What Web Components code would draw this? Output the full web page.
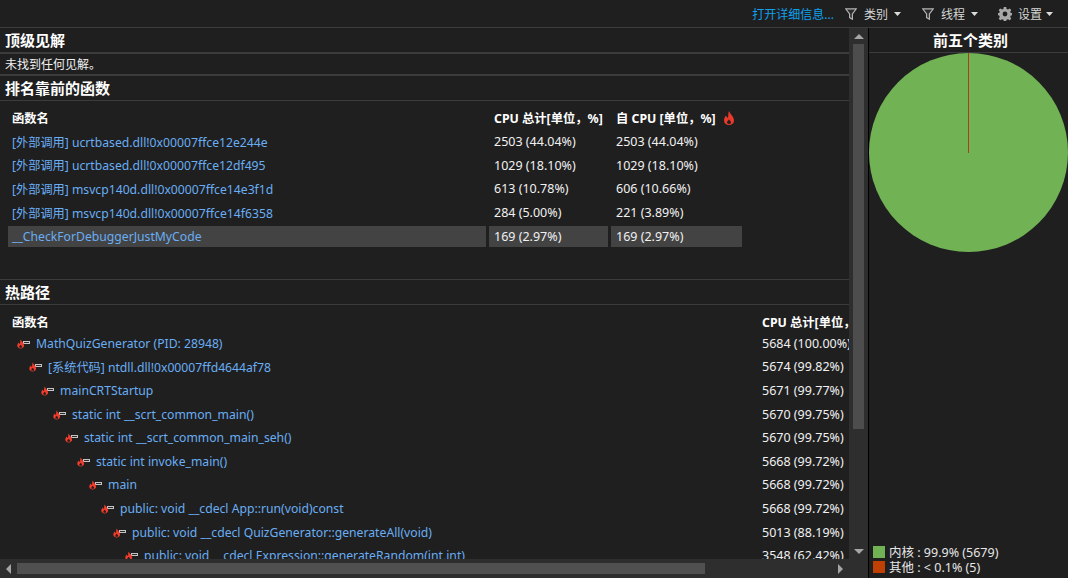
<!DOCTYPE html>
<html lang="zh">
<head>
<meta charset="utf-8">
<title>CPU</title>
<style>
html,body{margin:0;padding:0;background:#1f1f1f;height:100%;overflow:hidden}
body{font:12.5px "Noto Sans","Noto Sans CJK SC",sans-serif;color:#f1f1f1}
</style>
</head>
<body>
<profiler-app>
  <profiler-toolbar slot="toolbar">
    <a-link>打开详细信息...</a-link>
    <tool-button icon="filter" style="margin-left:11px">类别</tool-button>
    <tool-button icon="filter" style="margin-left:21px">线程</tool-button>
    <tool-button icon="gear" style="margin-left:20px">设置</tool-button>
  </profiler-toolbar>
  <scroll-area slot="content">
    <section-heading thick>顶级见解</section-heading>
    <note-row>未找到任何见解。</note-row>
    <section-heading>排名靠前的函数</section-heading>
    <func-table>
      <func-row header><row-cell>函数名</row-cell><row-cell>CPU 总计[单位，%]</row-cell><row-cell>自 CPU [单位，%]<flame-icon></flame-icon></row-cell></func-row>
      <func-row><row-cell link>[外部调用] ucrtbased.dll!0x00007ffce12e244e</row-cell><row-cell>2503 (44.04%)</row-cell><row-cell>2503 (44.04%)</row-cell></func-row>
      <func-row><row-cell link>[外部调用] ucrtbased.dll!0x00007ffce12df495</row-cell><row-cell>1029 (18.10%)</row-cell><row-cell>1029 (18.10%)</row-cell></func-row>
      <func-row><row-cell link>[外部调用] msvcp140d.dll!0x00007ffce14e3f1d</row-cell><row-cell>613 (10.78%)</row-cell><row-cell>606 (10.66%)</row-cell></func-row>
      <func-row><row-cell link>[外部调用] msvcp140d.dll!0x00007ffce14f6358</row-cell><row-cell>284 (5.00%)</row-cell><row-cell>221 (3.89%)</row-cell></func-row>
      <func-row selected><row-cell link>__CheckForDebuggerJustMyCode</row-cell><row-cell>169 (2.97%)</row-cell><row-cell>169 (2.97%)</row-cell></func-row>
    </func-table>
    <section-heading top>热路径</section-heading>
    <hot-table>
      <hot-row header total="CPU 总计[单位，%]">函数名</hot-row>
      <hot-row level="0" total="5684 (100.00%)">MathQuizGenerator (PID: 28948)</hot-row>
      <hot-row level="1" total="5674 (99.82%)">[系统代码] ntdll.dll!0x00007ffd4644af78</hot-row>
      <hot-row level="2" total="5671 (99.77%)">mainCRTStartup</hot-row>
      <hot-row level="3" total="5670 (99.75%)">static int __scrt_common_main()</hot-row>
      <hot-row level="4" total="5670 (99.75%)">static int __scrt_common_main_seh()</hot-row>
      <hot-row level="5" total="5668 (99.72%)">static int invoke_main()</hot-row>
      <hot-row level="6" total="5668 (99.72%)">main</hot-row>
      <hot-row level="7" total="5668 (99.72%)">public: void __cdecl App::run(void)const</hot-row>
      <hot-row level="8" total="5013 (88.19%)">public: void __cdecl QuizGenerator::generateAll(void)</hot-row>
      <hot-row level="9" total="3548 (62.42%)">public: void __cdecl Expression::generateRandom(int,int)</hot-row>
    </hot-table>
  </scroll-area>
  <category-panel slot="side">
    <pie-chart></pie-chart>
    <legend-item slot="legend" color="#71b354">内核 : 99.9% (5679)</legend-item>
    <legend-item slot="legend" color="#bf4000">其他 : &lt; 0.1% (5)</legend-item>
  </category-panel>
</profiler-app>

<script>
function def(name, html, extra){
  const t=document.createElement('template');t.innerHTML=html;
  customElements.define(name,class extends HTMLElement{
    constructor(){super();this.attachShadow({mode:'open'}).appendChild(t.content.cloneNode(true));}
    connectedCallback(){extra&&extra(this,this.shadowRoot);}
  });
}
const arrow=(pts,w,h)=>`<svg width="${w}" height="${h}" viewBox="0 0 ${w} ${h}"><polygon points="${pts}" fill="#a6a6a6"/></svg>`;

def('profiler-app',`<style>
:host{display:flex;flex-direction:column;width:1068px;height:578px;background:#1f1f1f;overflow:hidden}
.main{flex:1;min-height:0;display:grid;grid-template-columns:849px 19px 1px 199px}
.left{display:flex;flex-direction:column;min-height:0;min-width:0}
.body{flex:1;min-height:0;overflow:hidden}
.sep{background:#000}
.vbar{background:#2e2e2e;display:flex;flex-direction:column;padding-bottom:19px;align-items:center}
.vbtn{height:16px;display:flex;align-items:center;justify-content:center;flex:none}
.vthumb{width:11px;height:385px;background:#4d4d4d;flex:none}
.sp{flex:1}
.hbar{height:19px;flex:none;background:#2e2e2e;display:flex;align-items:center}
.hbtn{width:17px;height:19px;display:flex;align-items:center;justify-content:center;flex:none}
.hthumb{width:688px;height:11px;background:#505050}
</style>
<slot name="toolbar"></slot>
<div class="main">
  <div class="left">
    <div class="body"><slot name="content"></slot></div>
    <div class="hbar">
      <div class="hbtn">${arrow('5,0 5,10 0,5',5,10)}</div>
      <div class="hthumb"></div><div class="sp"></div>
      <div class="hbtn">${arrow('0,0 0,10 5,5',5,10)}</div>
    </div>
  </div>
  <div class="vbar">
    <div class="vbtn">${arrow('5,0 10,5 0,5',10,5)}</div>
    <div class="vthumb"></div><div class="sp"></div>
    <div class="vbtn">${arrow('0,0 10,0 5,5',10,5)}</div>
  </div>
  <div class="sep"></div>
  <slot name="side"></slot>
</div>`);

def('profiler-toolbar',`<style>
:host{display:flex;align-items:center;justify-content:flex-end;height:27px;flex:none;border-bottom:1px solid #3c3c3c;padding-right:15px;background:#1f1f1f;white-space:nowrap}
</style><slot></slot>`);

def('a-link',`<style>:host{display:inline-block;color:#0ea2ee;font-size:12px}</style><slot></slot>`);

const icons={
 filter:`<svg width="12" height="12" viewBox="0 0 12 12"><path d="M.7 .8H11.3L7.4 5.9V11.2L4.6 9.6V5.9Z" fill="#2c2c2c" stroke="#b4b4b4" stroke-width="1.2"/></svg>`,
 gear:`<svg width="14" height="14" viewBox="0 0 14 14"><path fill="#a8a8a8" fill-rule="evenodd" d="M5.8 0H8.2L8.6 1.9 10 2.5 11.7 1.4 13.3 3 12.2 4.7 12.8 6 14 6V8.3L12.8 8.6 12.2 10 13.3 11.7 11.7 13.3 10 12.2 8.6 12.8 8.2 14H5.8L5.4 12.8 4 12.2 2.3 13.3 0.7 11.7 1.8 10 1.2 8.6 0 8.3V6L1.2 6 1.8 4.7 0.7 3 2.3 1.4 4 2.5 5.4 1.9ZM7 4.6A2.4 2.4 0 1 0 7 9.4 2.4 2.4 0 1 0 7 4.6Z"/></svg>`
};
def('tool-button',`<style>
:host{display:inline-flex;align-items:center;color:#d6d6d6;font-size:12px}
.i{display:flex;margin-right:6px}
:host([icon=filter]) .i{margin-right:7px}
.c{margin-left:6px;display:flex}
:host([icon=gear]) .c{margin-left:4px}
</style><span class="i"></span><slot></slot>
<span class="c"><svg width="7" height="4" viewBox="0 0 7 4"><polygon points="0,0 7,0 3.5,4" fill="#dcdcdc"/></svg></span>`,
(el,r)=>{r.querySelector('.i').innerHTML=icons[el.getAttribute('icon')]||'';});

def('scroll-area',`<style>:host{display:block;height:100%;overflow:hidden;white-space:nowrap}</style><slot></slot>`);

def('section-heading',`<style>
:host{display:flex;align-items:center;height:24px;padding-left:5px;font-weight:700;font-size:15px;line-height:22px;color:#fff;border-bottom:1px solid #3c3c3c}
:host([thick]){border-bottom-width:2px}
:host([top]){border-top:1px solid #3c3c3c}
</style><slot></slot>`);

def('note-row',`<style>
:host{display:flex;align-items:center;height:20px;padding-left:5px;font-size:12px;color:#f1f1f1;border-bottom:2px solid #3c3c3c}
</style><slot></slot>`);

def('func-table',`<style>
:host{display:flex;flex-direction:column;row-gap:2.72px;padding:6px 0 32px 8px}
</style><slot></slot>`);

def('func-row',`<style>
:host{display:grid;grid-template-columns:478px 119px 131px;column-gap:3px;height:21px;width:734px}
:host([header]){font-weight:700;font-size:12.3px;color:#fff;margin-bottom:.3px}
:host([selected]){--cell-bg:#434343}
</style><slot></slot>`);

def('row-cell',`<style>
:host{display:flex;align-items:center;padding-left:5px;background:var(--cell-bg,transparent);white-space:nowrap;min-width:0}
:host(:first-child){padding-left:4px}
:host([link]){color:#69aef4;font-size:12.2px}
</style><slot></slot>`);

const flame='M6 0C7 3 11 5.5 11 9.5 11 12.3 9 14 6 14 3 14 1 12.3 1 9.5 1 7.5 2 6 3 4.6 3.5 6 4 6.6 5 6.8 5.6 4.4 5 2 6 0ZM6 8.2C5.2 9.6 4 10.2 4 11.6 4 12.6 5 13 6 13 7 13 8 12.6 8 11.6 8 10.2 6.8 9.6 6 8.2Z';
def('flame-icon',`<style>:host{display:inline-flex;margin-left:7px}</style>
<svg width="12" height="14" viewBox="0 0 12 14"><path fill="#e83a2c" fill-rule="evenodd" d="${flame}"/></svg>`);

def('hot-table',`<style>:host{display:flex;flex-direction:column;row-gap:2.67px;padding-top:7px}</style><slot></slot>`);

def('hot-row',`<style>
:host{display:grid;grid-template-columns:762px auto;height:21px;align-items:center;white-space:nowrap}
:host([header]){font-weight:700;font-size:12.3px;color:#fff;margin-bottom:-3px}
.n{display:flex;align-items:center;color:#69aef4;font-size:12.2px;min-width:0}
:host([header]) .n{color:#fff;font-size:12.3px;padding-left:12px}
.ic{display:flex;margin-right:5px}
</style>
<div class="n"><span class="ic"></span><slot></slot></div><div class="t"></div>`,
(el,r)=>{
  r.querySelector('.t').textContent=el.getAttribute('total');
  if(!el.hasAttribute('header')){
    const lv=+el.getAttribute('level');
    r.querySelector('.n').style.paddingLeft=(17+12*lv)+'px';
    r.querySelector('.ic').innerHTML=`<svg width="14" height="11" viewBox="0 0 14 11"><rect x="6.5" y="3.5" width="6" height="2" fill="#2a2a2a" stroke="#c4c4c4"/><path transform="translate(-.4 1.5) scale(.68 .64)" fill="#f03c2c" fill-rule="evenodd" d="${flame}"/></svg>`;
  } else r.querySelector('.ic').remove();
});

def('category-panel',`<style>
:host{display:flex;flex-direction:column;min-height:0;background:#1f1f1f}
.h{height:24px;display:flex;align-items:center;justify-content:center;padding-left:4px;font-weight:700;font-size:15px;line-height:22px;color:#fff;border-bottom:1px solid #3c3c3c;flex:none}
.g{flex:1}
.l{display:flex;flex-direction:column;row-gap:0;padding:0 0 4px 4px}
</style><div class="h">前五个类别</div><slot></slot><div class="g"></div><div class="l"><slot name="legend"></slot></div>`);

def('pie-chart',`<style>:host{display:block;width:199px;height:199px;flex:none}svg{display:block}</style>
<svg width="199" height="199" viewBox="0 0 199 199"><circle cx="99.5" cy="99.5" r="99.5" fill="#71b354"/><rect x="99" y="0" width="1" height="100" fill="#a8401a"/></svg>`);

def('legend-item',`<style>
:host{display:flex;align-items:center;height:15px;font-size:12.5px;color:#e6e6e6;white-space:nowrap}
.s{width:12px;height:12px;margin:0 4px 0 0;flex:none}
</style><span class="s"></span><slot></slot>`,
(el,r)=>{r.querySelector('.s').style.background=el.getAttribute('color');});
</script>
</body>
</html>
